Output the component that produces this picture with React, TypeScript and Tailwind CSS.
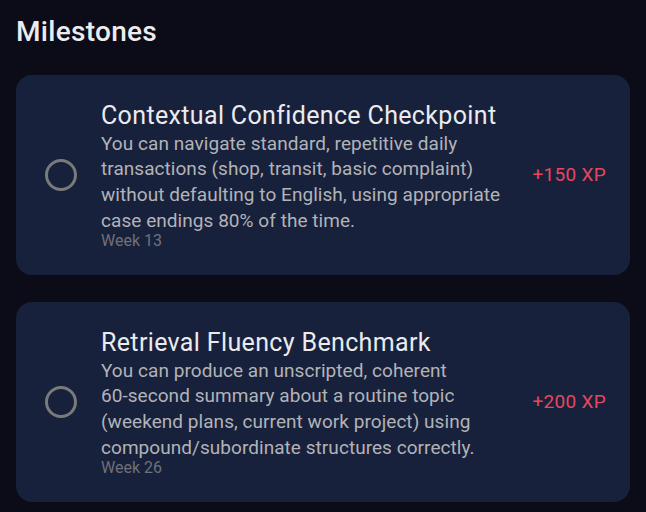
const milestones = [
  {
    id: 1,
    title: "Contextual Confidence Checkpoint",
    description:
      "You can navigate standard, repetitive daily transactions (shop, transit, basic complaint) without defaulting to English, using appropriate case endings 80% of the time.",
    week: 13,
    xp: 150,
  },
  {
    id: 2,
    title: "Retrieval Fluency Benchmark",
    description:
      "You can produce an unscripted, coherent 60-second summary about a routine topic (weekend plans, current work project) using compound/subordinate structures correctly.",
    week: 26,
    xp: 200,
  },
];

// keep hyphenated words like "60-second" on one line
function renderText(text: string) {
  return text.split(" ").map((word, i) => (
    <span key={i}>
      {i > 0 && " "}
      {word.includes("-") ? <span className="whitespace-nowrap">{word}</span> : word}
    </span>
  ));
}

export default function App() {
  return (
    <div className="min-h-screen bg-[#0b0c18] px-4 pt-[14px] font-['Roboto',sans-serif]">
      <h1 className="mb-[25px] text-[28px] leading-[36px] font-medium tracking-[0.3px] text-[#ececf0]">
        Milestones
      </h1>

      <div className="flex flex-col gap-[27px]">
        {milestones.map((m) => (
          <div
            key={m.id}
            className="flex items-center gap-6 rounded-2xl bg-[#18213b] py-[25.8px] pl-[29px] pr-6"
          >
            <div className="h-8 w-8 shrink-0 rounded-full border-[3px] border-[#7a7a7c]"></div>
            <div className="flex-1">
              <div className="text-[25px] leading-[30px] tracking-[0.35px] text-[#ebebee]">{m.title}</div>
              <p className="text-[19px] leading-[25.6px] tracking-[0.05px] text-[#b2b3b8]">
                {renderText(m.description)}
              </p>
              <div className="text-[16px] leading-[16px] text-[#6f7078]">Week {m.week}</div>
            </div>
            <div className="shrink-0 text-[19px] tracking-[0.3px] text-[#e5475f]">+{m.xp} XP</div>
          </div>
        ))}
      </div>
    </div>
  );
}
